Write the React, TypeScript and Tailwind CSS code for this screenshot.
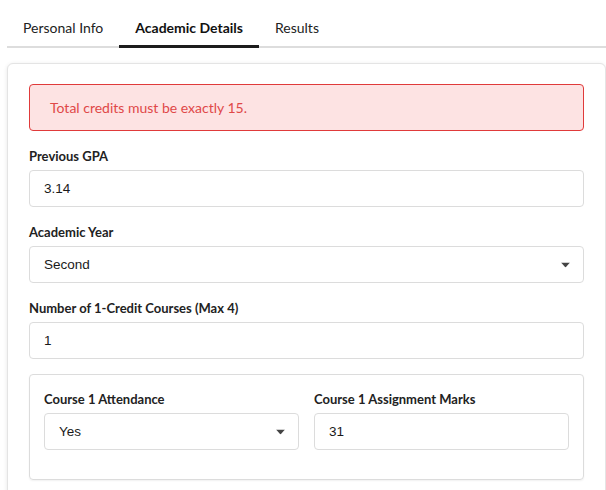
const tabs = ["Personal Info", "Academic Details", "Results"];

const Caret = () => (
  <svg width="9" height="5" viewBox="0 0 9 5" className="absolute right-[13px] top-1/2 -translate-y-1/2">
    <path d="M0 0 H9 L4.5 5 Z" fill="#444" />
  </svg>
);

const Field = ({ label, children }: { label: string; children: React.ReactNode }) => (
  <div className="mb-[15px] flex flex-col gap-1">
    <label className="text-[13px] leading-5 font-bold text-[#222]">{label}</label>
    {children}
  </div>
);

const Box = ({ value, select }: { value: string; select?: boolean }) => (
  <div className="relative flex h-[37px] items-center rounded border border-[#dcdcdc] bg-white px-[14px] pt-[2px] font-['Liberation_Sans',Arial,sans-serif] text-[13.5px] text-[#1a1a1a]">
    {value}
    {select && <Caret />}
  </div>
);

export default function App() {
  return (
    <div className="min-h-[490px] overflow-hidden bg-white font-['Lato',sans-serif]">
      <div className="ml-[7px] w-[640px]">
        <div className="flex border-b-2 border-[#dddddd] pt-[10px]">
          {tabs.map((t) => (
            <div
              key={t}
              className={
                t === "Academic Details"
                  ? "-mb-[2px] border-b-[3px] border-[#1c1c1c] px-4 pt-2 pb-[7px] text-[14px] leading-5 font-bold text-[#111]"
                  : "px-4 pt-2 pb-2 text-[14px] leading-5 text-[#222]"
              }
            >
              {t}
            </div>
          ))}
        </div>
      </div>

      <div className="ml-[7px] mt-[15px] w-[599px] rounded-md border border-[#e4e4e4] bg-white px-[21px] pt-[20px] pb-[21px] shadow-[0_1px_4px_rgba(0,0,0,0.1)]">
        <div className="mb-[15px] flex h-[47px] items-center rounded border border-[#e03a3a] bg-[#fde3e3] px-5 text-[14px] text-[#e04848]">
          Total credits must be exactly 15.
        </div>

        <Field label="Previous GPA">
          <Box value="3.14" />
        </Field>
        <Field label="Academic Year">
          <Box value="Second" select />
        </Field>
        <Field label="Number of 1-Credit Courses (Max 4)">
          <Box value="1" />
        </Field>

        <div className="rounded border border-[#dcdcdc] px-[14px] pt-[14px] pb-[14px] shadow-[0_1px_2px_rgba(0,0,0,0.06)]">
          <div className="grid grid-cols-2 gap-x-[15px]">
            <Field label="Course 1 Attendance">
              <Box value="Yes" select />
            </Field>
            <Field label="Course 1 Assignment Marks">
              <Box value="31" />
            </Field>
          </div>
        </div>
      </div>
    </div>
  );
}
